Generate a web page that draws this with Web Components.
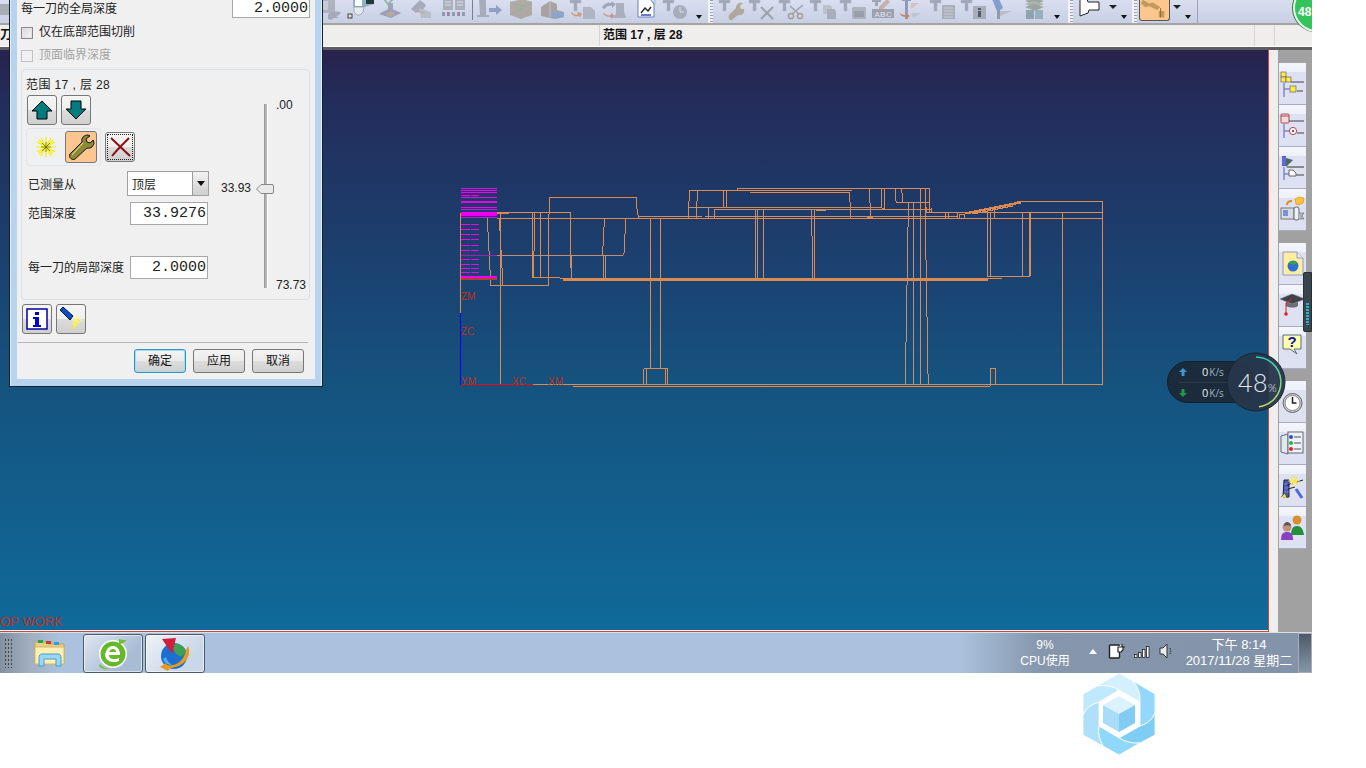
<!DOCTYPE html>
<html lang="zh">
<head>
<meta charset="utf-8">
<title>CAM</title>
<style>
  html, body { margin: 0; background: #fff; }
  body { font-family: "Liberation Sans", "Noto Sans CJK SC", sans-serif; width: 1366px; height: 768px; overflow: hidden; }
</style>
</head>
<body>
<app-desktop>
  <tool-strip></tool-strip>
  <status-strip></status-strip>
  <div slot="main"><cad-viewport></cad-viewport></div>
  <side-palette slot="side"></side-palette>
  <win-taskbar slot="bar"></win-taskbar>
  <op-dialog slot="over"></op-dialog>
  <net-meter slot="over"></net-meter>
  <green-badge slot="over"></green-badge>
  <dock-handle slot="over"></dock-handle>
</app-desktop>
<hex-logo></hex-logo>

<script>
// small helper: every element is just a style block + markup in an open shadow root
function define(name, css, html) {
  customElements.define(name, class extends HTMLElement {
    constructor() {
      super();
      this.attachShadow({ mode: 'open' });
      this.shadowRoot.innerHTML = `<style>${css}</style>${typeof html === 'function' ? html() : html}`;
    }
  });
}

const CJK = `"Liberation Sans", "Noto Sans CJK SC", sans-serif`;

define('app-desktop', `
  :host { display: block; position: relative; width: 1312px; height: 673px; overflow: hidden; background: #fff; }
  .main { display: flex; height: 582px; }
  .main ::slotted([slot=main]) { width: 1268px; height: 582px; }
`, `
  <slot></slot>
  <div class="main"><slot name="main"></slot><slot name="side"></slot></div>
  <slot name="bar"></slot>
  <slot name="over"></slot>
`);

/* ---------- top toolbar ---------- */
const tool = `<path d="M1 1h11v3H8v8H5V4H1z" fill="#8f97a8" stroke="#a9afbd" stroke-width=".6"/>`;
const tbIcons = [
  // machine block + wrench
  `<rect x="2" y="0" width="17" height="14" fill="#a4a8b2"/><rect x="4" y="2" width="8" height="9" fill="#c3c6cf"/><path d="M12 15c4-3 8-3 13-2l-2 3-3 1 3 2h-5l-3 2-3-1z" fill="#9a9ea8"/>`,
  // shiny cutter
  `<path d="M6 0h21v5l-9 3H6z" fill="#8fb4c0"/><path d="M8 0h7v7H8z" fill="#fff"/><path d="M19 1h8v4h-8z" fill="#243840"/><path d="M7 8h10l-1 5-3 3h-3l-3-3z" fill="#e4ebee" stroke="#7d8b92" stroke-width=".6"/><rect x="1" y="15" width="4" height="4" fill="#ddd" stroke="#222" stroke-width=".8"/>`,
  // check + tool on slab
  `<path d="M6 0l4 5 5-5" fill="none" stroke="#7fb59a" stroke-width="2"/><rect x="10" y="4" width="5" height="9" fill="#8f97a8"/><path d="M1 15l11-6 11 5-10 5z" fill="#8892ab"/><path d="M7 15l6-3 5 3-6 3z" fill="#b59a88"/>`,
  // tool + sheet
  `<path d="M2 10l9-9 6 5-3 5-7 3z" fill="#9aa0ae"/><path d="M10 9l12 4v6H12z" fill="#b3b7c2"/><path d="M6 12l10 2" stroke="#c98f7c"/>`,
  // two columns, dashed bar
  `<rect x="3" y="0" width="10" height="11" fill="#a0a4b0"/><rect x="15" y="0" width="10" height="11" fill="#a0a4b0"/><path d="M5 3h6M5 6h6M17 3h6M17 6h6" stroke="#dfe2ea"/><path d="M2 15h24" stroke="#7d8ca8" stroke-width="4" stroke-dasharray="3 2"/><path d="M8 13v4M19 13v4" stroke="#9a6a8a" stroke-width="2"/>`,
  // T tool + blue arrow
  `<path d="M3 0h7v16h3v2H1v-2h3z" fill="#9aa0ae"/><path d="M13 9h7V6l6 5-6 5v-3h-7z" fill="#7f90bd"/>`,
  // crossed box
  `<path d="M3 3l13-3 9 3v13l-11 4-11-4z" fill="#a89d8e"/><path d="M3 3l11 4 11-4M14 7v13M4 5l20 10M24 5L4 15" stroke="#8fa08c" fill="none"/>`,
  // stepped block
  `<path d="M3 8l9-6 7 3v6l7 2v5l-9 2-14-3z" fill="#9d958d"/><path d="M12 13l14 0v5l-9 2-5-2z" fill="#7e97c2"/><path d="M12 2v16" stroke="#bcbcc4"/>`,
  // tool, orange arrow, doc
  tool + `<path d="M3 13c2 3 4 3 6 2l-1-2 5 1-2 5-1-2c-3 1-6 0-8-3z" fill="#c98f5e"/><path d="M14 8h8l4 4v8H14z" fill="#a7acb8"/>`,
  // arrow, machine
  `<path d="M2 9c2-5 6-6 10-5l-1-2 5 3-4 4V7C9 6 6 7 5 10z" fill="#8f97a8"/><path d="M4 14c2 2 4 3 7 2v-2l4 3-4 3v-2c-3 0-6-1-8-3z" fill="#c9866c"/><path d="M16 4h8v8l2 7H13l3-4z" fill="#a0a5b2"/>`,
  // document + chart (full colour)
  `<path d="M7 0h12l4 5v13H7z" fill="#fff" stroke="#6b7fc0"/><path d="M19 0l5-2v7z" fill="#d6e0f5" stroke="#7c9ad0" stroke-width=".6"/><path d="M10 14l4-5 3 3 3-4" fill="none" stroke="#222" stroke-width="1.400"/><path d="M10 16h10" stroke="#3050b0" stroke-width="1.500"/>`,
  // tool + clock
  tool + `<circle cx="18" cy="13" r="7" fill="#9da2ae"/><path d="M18 8v5h4" fill="none" stroke="#e0e2e8"/>`
];
const tbIcons2 = [
  tool + `<path d="M11 16l7-7c0-4 3-6 7-5l-3 3 1 3 3 0c1 4-2 7-6 6l-6 5c-3 1-4-3-3-5z" fill="#a89c86"/>`,
  tool + `<path d="M13 8l12 12M25 8L13 20" stroke="#8f949f" stroke-width="2"/>`,
  tool + `<path d="M12 7l9 8M25 6l-11 9" stroke="#8f949f" stroke-width="1.600"/><circle cx="13" cy="17" r="2.600" fill="none" stroke="#9a8f88" stroke-width="1.500"/><circle cx="22" cy="17" r="2.600" fill="none" stroke="#9a8f88" stroke-width="1.500"/>`,
  tool + `<path d="M14 6h7l2 2v7h-9z" fill="#b7bbc5"/><path d="M18 10h7l2 2v8h-9z" fill="#9ea3b0"/>`,
  tool + `<rect x="13" y="8" width="14" height="12" rx="1" fill="#a5a9b2"/><rect x="15" y="12" width="10" height="6" fill="#8a8f9b"/>`,
  `<path d="M3 0h9v3H9v4H6V3H3z" fill="#8f97a8"/><path d="M10 8l8-8 3 3-8 8h-3z" fill="#c6a49a"/><rect x="3" y="10" width="22" height="9" fill="#8f939e"/><text x="14" y="18" font-family="Liberation Sans" font-size="8" font-weight="700" fill="#cfd2da" text-anchor="middle">ABC</text>`,
  `<path d="M3 0h9v2H9v18H6V2H3z" fill="#7d8aa8"/><path d="M12 4h8l-8 6z" fill="#d8b4bc"/><path d="M1 14c2 2 4 2 6 2v-2l4 3-4 3v-2c-3 0-5-1-6-3z" fill="#c2704c"/><path d="M12 14h10l-8 5z" fill="#b9becb"/>`,
  tool + `<rect x="13" y="6" width="13" height="14" fill="#a0a5b1"/><path d="M15 9h9M15 12h9M15 15h9M15 18h9" stroke="#c6c9d2"/>`,
  tool + `<rect x="13" y="7" width="13" height="13" fill="#9ea2ad"/><rect x="18" y="9" width="3" height="2" fill="#2e3a4c"/><rect x="18" y="12" width="3" height="6" fill="#2e3a4c"/>`,
  `<path d="M2 0h7l4 9-3 2-3 1z" fill="#6d8ec4"/><path d="M7 10v10h3V10z" fill="#7d8aa0"/><path d="M10 12h12l-12 5z" fill="#b2b8c4"/>`,
  `<path d="M5 2l9-3 10 3-9 4z" fill="#8d9688"/><path d="M5 5l9-3 10 3-9 4z" fill="#a0a7a0"/><path d="M5 8l9-3 10 3-9 4z" fill="#8d9688"/><path d="M6 11h8v9H6z" fill="#7d96a0"/><path d="M15 11h8v9h-8z" fill="#8aa4b4"/>`
];
// the two icons that are not greyed out stay at full strength
const ic = (s, i, all) => `<svg class="ic${all === tbIcons && (i === 1 || i === 10) ? ' live' : ''}" viewBox="0 0 28 22" width="28" height="22">${s}</svg>`;
const dd = `<i class="dd"></i>`;
const grip = `<i class="grip"></i>`;

define('tool-strip', `
  :host { display: flex; align-items: flex-start; box-sizing: border-box; height: 25px; overflow: hidden;
    background: linear-gradient(#d9dff0, #c8cfe3); border-bottom: 2px solid #a4a4a4; }
  .stub { flex: none; width: 9px; height: 11px; margin: 4px 307px 0 0; background: #a9adb8; }
  .ic { flex: none; margin-right: 3px; margin-top: -1px; opacity: .78; }
  .ic.live { opacity: 1; }
  .set2 .ic { margin-right: 2.2px; }
  .set2 { display: flex; }
  .dd { flex: none; width: 0; height: 0; margin-top: 15px; border: 3px solid transparent; border-top: 4px solid #111; border-bottom: 0; }
  .grip { flex: none; width: 3px; height: 23px; background: repeating-linear-gradient(#9aa0b2 0 1px, #eef0f8 1px 3px); }
  .sep { flex: none; width: 1px; height: 20px; background: #7d7f88; }
  .wsep { flex: none; width: 2px; height: 23px; background: #f1f3fa; }
  .on { flex: none; width: 31px; height: 22px; margin-top: -1px; box-sizing: border-box; background: #fbc78f; border: 1px solid #555; border-top: 0; border-radius: 0 0 3px 3px; }
  .cap { flex: none; width: 0; height: 0; margin-top: 5px; border: 4px solid transparent; border-top: 4px solid #222; border-bottom: 0; }
`, () => `
  <i class="stub"></i>
  ${tbIcons.slice(0, 5).map((s, i) => ic(s, i, tbIcons)).join('')}
  <i class="sep" style="margin:0 3px 0 1px"></i>
  ${tbIcons.slice(5).map((s, i) => ic(s, i + 5, tbIcons)).join('')}
  <span style="width:3px"></span>${dd}
  <span style="width:6px"></span><i class="wsep"></i>${grip}
  <div class="set2" style="margin-left:5px">${tbIcons2.map((s, i) => ic(s, i, tbIcons2)).join('')}</div>
  <span style="width:4px"></span>${dd}
  <span style="width:8px"></span><i class="wsep"></i>${grip}
  <svg viewBox="0 0 22 19" width="22" height="19" style="flex:none;margin:-1px 0 0 5px"><path d="M2 0v17l8-3 1-3h10V3H10L9 0z" fill="#fff" stroke="#222"/></svg>
  <span style="width:9px"></span><i class="cap"></i><span style="width:4px"></span>${dd}
  <span style="width:5px"></span><i class="wsep"></i>${grip}
  <div class="on" style="margin-left:2px"><svg viewBox="0 0 31 21" width="29" height="21"><path d="M3 0l7 4 4-1 8 5-4 3-8-4-4 1-5-4z" fill="#c39a5e"/><path d="M20 12h6v7h-6z" fill="#c39a5e"/><path d="M22 9v10" stroke="#8a6a3a"/></svg></div>
  <span style="width:3px"></span><i class="cap"></i><span style="width:4px"></span>${dd}
  <i class="sep" style="margin-left:6px;height:23px;background:#9da3b4"></i>
`);

/* ---------- status strip ---------- */
define('status-strip', `
  :host { display: flex; box-sizing: border-box; height: 25px; background: #f0eeec; border-bottom: 3px solid #5e5e5e; box-shadow: inset 0 -1px #fff;
    font: 700 12px/21px ${CJK}; color: #111; }
  div { box-sizing: border-box; border-right: 1px solid #d9d6d3; height: 21px; overflow: hidden; }
  .a { width: 600px; } .b { width: 655px; padding-left: 3px; } .c { width: 20px; }
`, `<div class="a">刀</div><div class="b">范围 17 , 层 28</div><div class="c"></div>`);

/* ---------- CAD viewport ---------- */
const H = (y, a, b) => `M${a} ${y + .5}H${b}`;
const V = (x, a, b) => `M${x + .5} ${a}V${b}`;
function cadPaths() {
  const m = [
    H(384, 533, 1103), H(386, 573, 990), H(218, 497, 1103), H(212, 497, 570), H(213, 497, 509),
    V(460, 213, 313), V(500, 213, 384), V(499, 218, 231), V(501, 250, 268), V(502, 268, 285),
    V(570, 212, 268), V(548, 214, 285), H(285, 490, 549), H(197, 549, 636), V(549, 197, 214),
    V(636, 197, 209), V(637, 209, 215), V(638, 215, 218),
    V(532, 212, 277), V(533, 251, 277), V(534, 212, 251), V(540, 212, 277), H(277, 532, 560), H(278, 560, 564),
    V(650, 218, 368), V(660, 218, 368), H(368, 644, 668), V(646, 368, 384), V(665, 368, 384), V(667, 368, 384), V(643, 369, 384),
    V(604, 218, 227), V(603, 227, 246), V(602, 246, 255), V(625, 218, 234), V(624, 234, 253), V(623, 253, 255),
    H(190, 689, 745), H(188, 737, 930), H(190, 745, 852), H(192, 750, 850), V(737, 188, 190),
    V(689, 190, 201), V(688, 201, 218), V(696, 201, 218), V(723, 190, 208), V(726, 190, 208),
    H(216, 639, 702), H(216, 705, 957), H(209, 715, 931),
    V(708, 207, 218), V(714, 209, 218), V(763, 209, 278),
    V(814, 209, 279), V(812, 236, 279), V(850, 202, 218), V(849, 192, 202), V(870, 203, 217),
    V(884, 188, 208), V(901, 188, 193), V(902, 193, 202), H(202, 896, 929), V(896, 201, 202),
    V(920, 188, 384), V(925, 188, 260), V(926, 260, 317), V(927, 317, 374), V(928, 374, 384),
    V(929, 188, 212), V(931, 208, 212), H(212, 926, 1103), V(926, 207, 212),
    V(945, 212, 218), V(948, 212, 218), V(957, 213, 218), H(214, 959, 964), V(959, 214, 218), V(964, 214, 218),
    H(201, 1017, 1103), V(1102, 201, 385), V(990, 213, 277), H(276, 988, 1030), V(1029, 212, 276), V(1030, 212, 276),
    V(994, 207, 218), V(1062, 212, 384), H(278, 988, 1002), V(990, 368, 386), H(368, 990, 995), V(995, 368, 384),
    H(279, 563, 988), H(278, 564, 988), H(280, 563, 988), H(217, 867, 873), H(208, 882, 885), H(210, 816, 826)
  ];
  const d = [
    V(487, 218, 232), V(488, 232, 251), V(489, 251, 270), V(490, 270, 285), H(255, 497, 623), V(571, 255, 279),
    V(605, 255, 279), V(603, 255, 279), V(697, 190, 201), H(207, 689, 882), V(708, 207, 209),
    V(755, 209, 278), V(757, 209, 278), V(811, 209, 236), V(869, 188, 203),
    V(881, 188, 208), V(895, 188, 201), V(908, 203, 227), V(907, 227, 285), V(906, 285, 342), V(905, 342, 384), V(913, 203, 384),
    V(987, 213, 277), V(1022, 213, 276)
  ];
  // sloped part on the right, drawn as pixel stairs
  let s1 = 'M965 213', s2 = 'M972 213';
  for (let i = 0, x = 965, y = 213; i < 11; i++) { x += 5; s1 += `H${x}`; y -= 1; s1 += `V${y}`; }
  for (let i = 0, x = 972, y = 213; i < 8; i++) { x += 5; s2 += `H${x}`; y -= 1; s2 += `V${y}`; }
  const dash = [224, 229, 234, 239, 245, 250, 259, 264, 268, 272].map(y => H(y, 461, 470) + H(y, 471, 479)).join('') + H(195, 461, 470) + H(195, 471, 479);
  const full = [188, 190, 192, 197, 207, 209, 217].map(y => H(y, 461, 497)).join('');
  return `
    <path d="${m.join('')}" stroke="#dd8a50"/>
    <path d="${d.join('')}" stroke="#c48f6d"/>
    <path d="${s1}H1017" stroke="#dd8a50" stroke-width="2"/>
    <path d="${s2}" stroke="#dd8a50"/>
    <path d="${full}${dash}" stroke="#f000f0"/>
    <rect x="461" y="201" width="36" height="2" fill="#f000f0"/>
    <rect x="461" y="212" width="36" height="4" fill="#f000f0"/>
    <rect x="461" y="276" width="36" height="2" fill="#f000f0"/>
    <rect x="461" y="278" width="36" height="2" fill="#b03c34"/>
    <path d="${H(255, 461, 497)}" stroke="#a020b0"/>
    <path d="${V(460, 313, 385)}" stroke="#0000ff"/>
    <path d="${H(384, 461, 533)}" stroke="#ff0000"/>
  `;
}
define('cad-viewport', `
  :host { display: block; position: relative; width: 1268px; height: 582px; overflow: hidden; }
  .sky { position: absolute; inset: 0 0 2px 0; background: linear-gradient(#28224d 0, #232c5a 8%, #1b4271 38%, #15537f 58%, #0f6a9a 100%); }
  .rule { position: absolute; left: 0; right: 0; bottom: 0; height: 2px; background: linear-gradient(#eee 50%, #cf4a35 50%); }
  svg { position: absolute; inset: 0; }
  path { fill: none; shape-rendering: crispEdges; }
  text { font: 10px "Liberation Sans", sans-serif; fill: #b93322; }
  .work { position: absolute; left: 0; bottom: 3px; font: 13px/14px "Liberation Sans", sans-serif; color: #c22f1e; }
`, () => `
  <div class="sky"></div>
  <svg viewBox="0 50 1268 582" width="1268" height="582">
    ${cadPaths()}
    <text x="461" y="300">ZM</text><text x="461" y="335">ZC</text>
    <text x="461" y="385">YM</text><text x="512" y="385">XC</text><text x="548" y="385">XM</text>
  </svg>
  <div class="work">OP WORK</div>
  <div class="rule"></div>
`);

/* ---------- right palette ---------- */
const sideIcons = [
  `<g stroke="#555" stroke-width=".6"><rect x="2" y="10" width="5" height="5" fill="#ffe94a"/><rect x="2" y="15" width="5" height="5" fill="#ffe94a"/><rect x="7" y="15" width="5" height="5" fill="#ffe94a"/><rect x="11" y="24" width="6" height="6" fill="#ffe94a"/></g><path d="M12 20h13" stroke="#444"/><path d="M5 21v14M5 27h6" stroke="#7d86c8" stroke-width="1.400"/><path d="M18 29h6" stroke="#777" stroke-width="1.500"/>`,
  `<rect x="2" y="10" width="8" height="9" rx="1" fill="#f1dcdc" stroke="#b0484c"/><path d="M2 12h8" stroke="#b0484c"/><path d="M10 17h15" stroke="#444"/><path d="M5 20v14M5 27h6" stroke="#7d86c8" stroke-width="1.400"/><circle cx="14" cy="27" r="3.600" fill="#fff" stroke="#a8484c"/><circle cx="14" cy="27" r="1.200" fill="#a8484c"/><path d="M18 29h7" stroke="#777" stroke-width="1.500"/>`,
  `<rect x="3" y="10" width="4" height="10" fill="#4b58d8"/><path d="M3 12h4M3 14h4M3 16h4M3 18h4" stroke="#aab" stroke-width=".5"/><path d="M7 12l7 2-7 7z" fill="#4c6a62"/><path d="M8 21h17" stroke="#333"/><path d="M5 21v13M5 28h5" stroke="#7d86c8" stroke-width="1.400"/><path d="M10 24h4l3 3v3h-7z" fill="#fff" stroke="#666"/><path d="M17 29h8" stroke="#777" stroke-width="1.500"/>`,
  `<path d="M8 17c0-3 2-4 5-4" fill="none" stroke="#e08a1a" stroke-width="2"/><path d="M16 11l4-2 5 1-1 5-4 2-3-1z" fill="#ffc23a" stroke="#d08a10" stroke-width=".6"/><rect x="2" y="20" width="13" height="11" fill="#d8dce4" stroke="#777"/><rect x="4" y="22" width="5" height="6" fill="#7d90d0"/><rect x="15" y="19" width="5" height="13" rx="2" fill="#eef" stroke="#666"/><path d="M20 25h5l-2 3 2 3h-5" fill="#b0b4b8" stroke="#666" stroke-width=".6"/>`,
  `<path d="M4 10h14l6 6v17H4z" fill="#ffeea0" stroke="#8a98c8"/><path d="M18 10v6h6" fill="#e6ecf8" stroke="#8a98c8"/><circle cx="14" cy="24" r="5.500" fill="#2f6fd0"/><path d="M10 21c3-3 7-3 8 0-2 2-6 2-8 0z" fill="#3aa04a"/>`,
  `<path d="M1 15l12-5 13 5-13 5z" fill="#3f4248" stroke="#777" stroke-width=".5"/><path d="M7 18v4c4 2 9 2 12 0v-4l-6 2z" fill="#6a6e76"/><path d="M13 15l-6 4v10" fill="none" stroke="#e02020"/><circle cx="7" cy="30" r="1.800" fill="#e02020"/>`,
  `<path d="M4 9h18v14H15l3 5-7-5H4z" fill="#ffffa8" stroke="#5a6a8a"/><text x="13" y="21" font-family="Liberation Sans" font-size="15" font-weight="700" fill="#1212b0" text-anchor="middle">?</text>`,
  `<circle cx="13.500" cy="23" r="9.500" fill="#c8ccd0" stroke="#666"/><circle cx="13.500" cy="23" r="7.500" fill="#fff" stroke="#888"/><path d="M13.500 17v6h4" fill="none" stroke="#222" stroke-width="1.500"/>`,
  `<path d="M2 14l7-2v20l-7-2z" fill="#dfeaf0" stroke="#667"/><rect x="9" y="10" width="15" height="21" fill="#eef2f6" stroke="#667"/><circle cx="12" cy="15" r="2" fill="#3050c0"/><circle cx="12" cy="21" r="2" fill="#30b040"/><circle cx="12" cy="27" r="2" fill="#e02030"/><path d="M15 15h7M15 21h7M15 27h7" stroke="#555"/>`,
  `<path d="M5 16h5v17H4z" fill="#4b58c8" stroke="#223"/><path d="M5 20h5M5 24h5M5 28h5" stroke="#9aa" stroke-width=".6"/><path d="M17 25l6 9" stroke="#4b6ae0" stroke-width="3"/><path d="M8 21l16-5M9 25l7-2" stroke="#222"/><circle cx="15" cy="17" r="3" fill="#fff6a0"/><path d="M15 11v12M9 17h12M11 13l8 8M19 13l-8 8" stroke="#f0e040"/><path d="M2 33l4-4 2 5" fill="#f0e040" stroke="#222" stroke-width=".5"/>`,
  `<circle cx="18" cy="14" r="4.500" fill="#d89030"/><path d="M12 29c0-6 2-9 6-9s6 3 7 9z" fill="#20903a"/><circle cx="8" cy="21" r="4.500" fill="#c49078"/><path d="M5 20c0-3 2-4 3-4s4 1 4 4c-2-1-5-1-7 0z" fill="#555"/><path d="M2 34c0-6 2-8 6-8s6 2 6 8z" fill="#8a40c0"/>`
];
const sb = i => `<div class="b"><svg viewBox="0 1 27 42" width="27" height="42">${sideIcons[i]}</svg></div>`;
define('side-palette', `
  :host { display: block; position: relative; width: 44px; height: 582px; background: #a1a1a1; box-sizing: border-box; padding: 13px 0 0 11px;
    border-left: 1px solid #cf4a35; box-shadow: inset 9px 0 #eee; }
  .g { margin-bottom: 12px; width: 27px; margin-left: -1px; }
  .b { height: 42px; box-sizing: border-box; border-bottom: 1px solid #a9adc2; background: linear-gradient(#f4f6fc 0, #eef0f9 9px, #dde1f1 9px, #dde1f1 100%); }
  svg { display: block; }
`, () => `
  <div class="g">${[0, 1, 2, 3].map(sb).join('')}</div>
  <div class="g">${[4, 5, 6].map(sb).join('')}</div>
  <div class="g">${[7, 8, 9, 10].map(sb).join('')}</div>
`);

/* ---------- taskbar ---------- */
define('task-btn', `
  :host { display: flex; align-items: center; justify-content: center; box-sizing: border-box; width: 60px; height: 39px; margin-top: 1px; border: 1px solid #4c5a6c; border-radius: 3px;
    background: linear-gradient(135deg, #dfe7f1, #a8bcd6 70%); box-shadow: inset 0 0 0 1px rgba(255,255,255,.55); }
  :host([light]) { background: linear-gradient(135deg, #eef3f8, #c9d7e8 70%); }
`, `<slot></slot>`);
define('win-taskbar', `
  :host { display: flex; position: relative; height: 41px; box-sizing: border-box; border-top: 1px solid #d9dfe8;
    background: linear-gradient(90deg, #8390a2 0, #a0adbf 28px, #aac2dd 60px, #aac2dd 960px, #8696ac 1040px, #8393a9 1300px); color: #fff; font: 13px/16px ${CJK}; }
  .grip { width: 10px; height: 30px; margin: 5px 0 0 4px; background-image: radial-gradient(#444 45%, transparent 50%); background-size: 3px 4px; }
  .folder { margin: 4px 17px 0 20px; }
  .cpu { width: 60px; margin-left: 810px; text-align: center; margin-top: 4px; font-size: 12px; }
  .tray { display: flex; align-items: center; gap: 8px; margin: 0 0 4px 14px; }
  .tri { width: 0; height: 0; border: 4px solid transparent; border-bottom: 5px solid #fff; border-top: 0; margin-right: 3px; }
  .clock { width: 112px; text-align: center; margin: 4px 0 0 9px; }
  .clock div:last-child { white-space: nowrap; }
  .desk { width: 14px; margin-left: 3px; box-sizing: border-box; border: 1px solid #aab; background: linear-gradient(#4e5a6a, #8595a8); }
`, `
  <div class="grip"></div>
  <svg class="folder" viewBox="0 0 32 32" width="32" height="32">
    <path d="M1 5h11l2 2h16v19H1z" fill="#e9cf82" stroke="#c2a25a"/><rect x="4" y="3" width="5" height="3" fill="#2aa24a"/><rect x="12" y="4" width="5" height="3" fill="#c8402a"/><rect x="20" y="5" width="5" height="3" fill="#2a9fe0"/>
    <path d="M1 10h29v17H1z" fill="#fdf0b4" stroke="#d6b668"/>
    <path d="M5 29v-8c0-3 1-4 3-4h16c2 0 3 1 3 4v8h-5v-7H10v7z" fill="#9ad7f2" stroke="#4a9ccc"/>
  </svg>
  <task-btn>
    <svg viewBox="0 0 32 32" width="32" height="32"><circle cx="16" cy="16" r="14" fill="#fff"/><circle cx="16" cy="16" r="12.500" fill="#66b82a"/><path d="M9 14c1-4 4-6 7-6s6 2 7 7v2H12c0 3 2 4 5 4 2 0 3 0 5-1v3c-2 1-4 1-6 1-4 0-8-3-8-8z" fill="#fff"/><path d="M12 14h7c0-2-1-3-3-3s-3 1-4 3z" fill="#66b82a"/><path d="M22 1c4 1 6 2 8 0-2 4-6 5-8 5z" fill="#6cc030"/><path d="M3 26c2 3 5 4 8 5-4 1-7-1-9-3z" fill="#6cc030"/></svg>
  </task-btn>
  <task-btn light style="margin-left:2px">
    <svg viewBox="0 0 34 34" width="34" height="34"><circle cx="16" cy="19" r="13" fill="#1c6fd0"/><path d="M16 7c5-1 10 2 12 8l-5 5-5-3-3-5z" fill="#3f9f56"/><path d="M5 22c2 4 5 6 9 6-3-2-5-4-6-8z" fill="#5ab0ea"/><path d="M2 30l6-4 1 2C18 30 26 24 28 13l2-4c4 8-2 21-18 22l-2 3z" fill="#e89a1e"/><path d="M4 2l14-1-4 16z" fill="#d01f3c"/></svg>
  </task-btn>
  <div class="cpu"><div>9%</div><div>CPU使用</div></div>
  <div class="tray">
    <i class="tri"></i>
    <svg viewBox="0 0 18 18" width="18" height="18"><rect x="1.500" y="3" width="10" height="13" rx="1" fill="#fff" stroke="#222" stroke-width="1.400"/><path d="M10 5h4V2M14 5h3M15 5v3l-2 2h-3V5z" fill="#fff" stroke="#222" stroke-width="1.200"/></svg>
    <svg viewBox="0 0 16 13" width="16" height="13"><g fill="#fff" stroke="#222" stroke-width=".8"><rect x=".5" y="9.500" width="2.500" height="3"/><rect x="4.500" y="7.500" width="2.500" height="5"/><rect x="8.500" y="4.500" width="2.500" height="8"/><rect x="12.500" y="1.500" width="2.500" height="11"/></g></svg>
    <svg viewBox="0 0 16 16" width="16" height="16"><path d="M2 5h3l4-4v14l-4-4H2z" fill="#e8ecf0" stroke="#333"/><path d="M12 5c1 2 1 4 0 6" fill="none" stroke="#333" stroke-dasharray="1.500 1"/></svg>
  </div>
  <div class="clock"><div>下午 8:14</div><div>2017/11/28 星期二</div></div>
  <div class="desk"></div>
`);

/* ---------- dialog parts ---------- */
define('d-check', `
  :host { display: flex; align-items: center; gap: 6px; height: 13px; font: 12px/13px ${CJK}; color: #222; }
  :host([disabled]) { color: #a3a3a3; }
  i { flex: none; width: 10px; height: 10px; border: 1px solid #8a8a8a; box-shadow: inset 0 0 0 1px #e2e2e2; background: linear-gradient(135deg, #d8d8d8, #f6f6f6); }
  :host([disabled]) i { border-color: #c2c2c2; background: #f0f0f0; box-shadow: none; }
`, `<i></i><slot></slot>`);
define('d-field', `
  :host { display: block; box-sizing: border-box; border: 1px solid #a8a8a8; background: #fff; text-align: right;
    font: 15px/21px "Liberation Mono", monospace; color: #222; padding-right: 1px; overflow: hidden; }
`, `<slot></slot>`);
define('d-icon', `
  :host { display: flex; align-items: center; justify-content: center; flex: none; box-sizing: border-box; width: 30px; height: 30px; border: 1px solid #777; border-radius: 3px;
    background: linear-gradient(#f5f5f5 0, #efefef 50%, #dcdcdc 50%, #cfcfcf 100%); }
  :host([on]) { width: 32px; height: 32px; background: #fdc690; }
  :host([flat]) { width: 32px; height: 32px; background: none; border-color: transparent; }
  :host([focus]) { outline: 1px dotted #222; outline-offset: -3px; }
`, `<slot></slot>`);
define('d-button', `
  :host { display: block; box-sizing: border-box; width: 52px; height: 24px; border: 1px solid #767676; border-radius: 3px; text-align: center;
    font: 12px/22px ${CJK}; color: #111; background: linear-gradient(#f3f3f3 0, #ebebeb 50%, #dddddd 50%, #cfcfcf 100%); }
  :host([primary]) { border-color: #3294c8; box-shadow: inset 0 0 0 1px #a5dcf2; }
`, `<slot></slot>`);
define('d-slider', `
  :host { display: grid; grid-template-columns: 35px 18px 35px; height: 184px; font: 12px/14px "Liberation Sans", sans-serif; color: #222; position: relative; }
  .track { grid-column: 2; grid-row: 1; position: relative; }
  .track::before { content: ''; position: absolute; left: 9px; top: 0; bottom: 0; width: 2px; background: #b5b5b5; box-shadow: -1px 0 #9a9a9a, 1px 0 #fff; }
  .thumb { position: absolute; left: 0; top: 80px; width: 18px; height: 10px; }
  .val { grid-column: 1; grid-row: 1; margin-top: 77px; }
  .ends { grid-column: 3; grid-row: 1; display: flex; flex-direction: column; justify-content: space-between; padding-left: 2px; margin-top: -6px; margin-bottom: -4px; }
`, `
  <div class="val">33.93</div>
  <div class="track"><svg class="thumb" viewBox="0 0 18 10"><path d="M.5 5 5 .5h11a1.500 1.500 0 0 1 1.500 1.500v6a1.500 1.500 0 0 1-1.500 1.500H5z" fill="#e9e9e9" stroke="#888"/></svg></div>
  <div class="ends"><span>.00</span><span>73.73</span></div>
`);
const upArrow = `<svg viewBox="0 0 22 22" width="22" height="22"><path d="M11 2 21 12h-5v8H6v-8H1z" fill="#007c80" stroke="#000" stroke-width="1"/></svg>`;
const downArrow = `<svg viewBox="0 0 22 22" width="22" height="22"><path d="M6 2h10v8h5L11 20 1 10h5z" fill="#007c80" stroke="#000" stroke-width="1"/></svg>`;
const star = `<svg viewBox="0 0 22 22" width="22" height="22"><path d="M11 1v20M1 11h20M4 4l14 14M18 4 4 18M6 2l10 18M16 2 6 20M2 6l18 10M20 6 2 16" stroke="#f4f000" stroke-width="1.200"/><path d="M11 6v10M6 11h10M7 7l8 8M15 7l-8 8" stroke="#444" stroke-width=".6"/></svg>`;
const wrench = `<svg viewBox="0 0 28 28" width="28" height="28"><path d="M3 21 15 9c-1-4 2-7 6-7l2 1-4 3 1 3 3 1 3-3 1 2c0 4-3 7-7 6L8 26c-3 2-7-2-5-5z" fill="#8d8a36" stroke="#111"/><path d="M5 22 16 10" stroke="#f3ee70" stroke-width="1"/></svg>`;
const cross = `<svg viewBox="0 0 24 24" width="24" height="24"><path d="M3 3 22 21M21 3C14 10 8 16 4 21" fill="none" stroke="#8b1016" stroke-width="2"/></svg>`;
const info = `<svg viewBox="0 0 24 24" width="24" height="24"><rect x="2" y="2" width="20" height="20" fill="#fff" stroke="#0000a0" stroke-width="1.500"/><rect x="10" y="5" width="4" height="3" fill="#0000d0"/><path d="M8 10h6v8h2v2H8v-2h2v-6H8z" fill="#0000d0"/></svg>`;
const torch = `<svg viewBox="0 0 26 26" width="26" height="26"><path d="M2 4l3-3 10 9-3 4z" fill="#0a4cd0" stroke="#06182e"/><path d="M14 13l4-4 6 5-8 9z" fill="#fff89a" opacity=".6"/><path d="M15 15l3 3M14 19l4 3M19 13l3 3M13 23l3-2M17 20l3-3" stroke="#f6ee10" stroke-width="1.500" stroke-dasharray="1.500 1"/></svg>`;

define('op-dialog', `
  :host { position: absolute; left: 9px; top: -2px; width: 314px; box-sizing: border-box; display: block; background: #b7d3ee; padding: 0 7px 7px 7px;
    border: 1px solid #14222f; border-top: 0; box-shadow: inset 1px 0 #e0eefa, inset -1px 0 #e0eefa; font: 12px/16px ${CJK}; color: #222; }
  .panel { background: #f0f0f0; height: 381px; box-sizing: border-box; padding: 1px 5px 0 4px; display: flex; flex-direction: column; }
  .top { display: flex; justify-content: space-between; align-items: center; height: 19px; }
  .top d-field { width: 78px; height: 20px; line-height: 20px; margin-top: -1px; }
  .chk1 { margin-top: 8px; }
  .chk2 { margin-top: 10px; }
  .group { margin-top: 7px; height: 231px; box-sizing: border-box; border: 1px solid #d9e2ea; border-radius: 4px; padding: 7px 0 0 4px; display: flex; flex-direction: column; position: relative; }
  .cols { display: flex; }
  .left { width: 195px; }
  .rng { height: 16px; letter-spacing: .4px; }
  .arrows { display: flex; gap: 4px; margin: 2px 0 0 1px; }
  .acts { display: flex; align-items: center; gap: 4px; margin-top: 3px; }
  .well { display: flex; align-items: center; gap: 3px; width: 75px; height: 38px; box-sizing: border-box; border: 1px solid #dfe6ec; border-radius: 4px; padding: 0 3px; }
  .row { display: flex; align-items: center; padding-left: 2px; }
  .combo { flex: none; width: 82px; height: 25px; margin-left: 51px; box-sizing: border-box; border: 1px solid #a0a0a0; background: #fff; display: flex; align-items: center; padding-left: 4px; justify-content: space-between; }
  .combo i { width: 16px; height: 23px; box-sizing: border-box; border-left: 1px solid #999; background: linear-gradient(#f2f2f2, #cfcfcf); display: flex; align-items: center; justify-content: center; }
  .combo i::before { content: ''; border: 4px solid transparent; border-top: 5px solid #111; border-bottom: 0; }
  .r1 { margin-top: 5px; height: 25px; }
  .r1 span { padding-top: 2px; }
  .r2 { margin-top: 6px; height: 23px; }
  .r3 { margin-top: 31px; height: 23px; }
  .r2 d-field { width: 78px; height: 23px; margin-left: 54px; }
  .r3 d-field { width: 78px; height: 23px; margin-left: 6px; }
  .bottom { display: flex; gap: 4px; margin: 4px 0 0 1px; }
  .rule { height: 1px; background: #b5b5b5; margin: 8px 2px 0 -3px; }
  .btns { display: flex; justify-content: flex-end; gap: 7px; margin: 6px 6px 0 0; }
  d-slider { margin: 27px 0 0 1px; }
`, `
  <div class="panel">
    <div class="top"><span>每一刀的全局深度</span><d-field>2.0000</d-field></div>
    <d-check class="chk1">仅在底部范围切削</d-check>
    <d-check class="chk2" disabled>顶面临界深度</d-check>
    <div class="group">
      <div class="cols">
        <div class="left">
          <div class="rng">范围 17 , 层 28</div>
          <div class="arrows"><d-icon>${upArrow}</d-icon><d-icon>${downArrow}</d-icon></div>
          <div class="acts">
            <div class="well"><d-icon flat>${star}</d-icon><d-icon on>${wrench}</d-icon></div>
            <d-icon focus>${cross}</d-icon>
          </div>
          <div class="row r1"><span>已测量从</span><div class="combo"><span>顶层</span><i></i></div></div>
          <div class="row r2"><span>范围深度</span><d-field>33.9276</d-field></div>
          <div class="row r3"><span>每一刀的局部深度</span><d-field>2.0000</d-field></div>
        </div>
        <d-slider></d-slider>
      </div>
    </div>
    <div class="bottom"><d-icon>${info}</d-icon><d-icon>${torch}</d-icon></div>
    <div class="rule"></div>
    <div class="btns"><d-button primary>确定</d-button><d-button>应用</d-button><d-button>取消</d-button></div>
  </div>
`);

/* ---------- floating widgets ---------- */
define('net-meter', `
  :host { position: absolute; left: 1167px; top: 352px; width: 120px; height: 60px; display: block; font: 10px/20px "Open Sans", "Liberation Sans", sans-serif; color: #9fb0bd; }
  .pill { position: absolute; left: 0; top: 9px; width: 90px; height: 42px; box-sizing: border-box; border-radius: 21px; background: #1b2b3b; border: 1px solid #14202c; padding-left: 11px; }
  .r { display: flex; align-items: center; height: 20px; }
  .r + .r { border-top: 1px solid #2a3a4a; }
  .r svg { margin-right: 15px; }
  b { font-weight: 400; color: #e6edf2; font-size: 11px; margin-right: 1px; }
  .dial { position: absolute; left: 59px; top: 0; width: 60px; height: 60px; }
  .num { position: absolute; left: 71px; top: 15px; font: 300 25px/30px Lato, "Open Sans", sans-serif; color: #e4e8ec; letter-spacing: .5px; }
  .pct { font-size: 11px; letter-spacing: 0; }
`, `
  <div class="pill">
    <div class="r"><svg viewBox="0 0 8 8" width="8" height="8"><path d="M4 0l4 4H5.500v4h-3V4H0z" fill="#3a9ad0"/></svg><b>0</b>K/s</div>
    <div class="r"><svg viewBox="0 0 8 8" width="8" height="8"><path d="M4 8 0 4h2.500V0h3v4H8z" fill="#1f9a4a"/></svg><b>0</b>K/s</div>
  </div>
  <svg class="dial" viewBox="0 0 60 60">
    <defs><linearGradient id="arc" x1="0" y1="0" x2="0" y2="1"><stop offset="0" stop-color="#2fd0c0"/><stop offset="1" stop-color="#c6e060"/></linearGradient></defs>
    <circle cx="30" cy="30" r="29" fill="#26364a" fill-opacity=".96" stroke="#1a2532"/>
    <path d="M30 5A25 25 0 0 1 33 54.800" fill="none" stroke="url(#arc)" stroke-width="1.500"/>
  </svg>
  <div class="num">48<span class="pct">%</span></div>
`);
define('green-badge', `
  :host { position: absolute; left: 1293px; top: -16px; width: 48px; height: 48px; box-sizing: border-box; border-radius: 50%; display: block; background: #35c45c;
    border: 2px solid #e8f4ea; box-shadow: -1px 0 #2a7a40; font: 700 12px/46px "Liberation Sans", sans-serif; color: #fff; padding: 2px 0 0 3px; }
  span { position: relative; top: 1px; }
`, `<span>48</span>`);
define('dock-handle', `
  :host { position: absolute; left: 1303px; top: 272px; width: 9px; height: 60px; box-sizing: border-box; display: block; background: #3a444e; border: 1px solid #283038; border-radius: 2px 0 0 2px; padding: 6px 2px; }
  i { display: block; height: 100%; background: repeating-linear-gradient(#25d0e6 0 2px, transparent 2px 3px); opacity: .8; clip-path: inset(50% 0 0 0); }
`, `<i></i>`);

define('hex-logo', `
  :host { display: block; width: 72px; height: 82px; margin-left: 1083px; }
  svg { display: block; }
  .blades path { stroke: #fff; stroke-width: .8; }
`, `
  <svg viewBox="0 0 72 82" width="72" height="82">
    <g class="blades">
      <path d="M14 13 36 0 50 8Q58 17 57 29L36 17Q26 11 14 13Z" fill="#d4effd"/>
      <path d="M50 8 72 21V40Q68 50 57 53V29Q58 17 50 8Z" fill="#93d8fa"/>
      <path d="M72 40V62L57 70Q46 71 36 65L57 53Q68 50 72 40Z" fill="#7fcdf5"/>
      <path d="M57 70 36 82 20 73Q14 63 16 53L36 65Q46 71 57 70Z" fill="#8fd8fb"/>
      <path d="M20 73 0 62V42Q4 32 16 29V53Q14 63 20 73Z" fill="#aee0fa"/>
      <path d="M0 42V21L14 13Q26 11 36 17L16 29Q4 32 0 42Z" fill="#c0e9fe"/>
    </g>
    <path d="M36 23 52 32 36 41 20 32z" fill="#dcf2fe"/>
    <path d="M20 32 36 41V59L20 50z" fill="#a8dcf9"/>
    <path d="M52 32 36 41V59L52 50z" fill="#82ccf4"/>
  </svg>
`);
</script>
</body>
</html>
